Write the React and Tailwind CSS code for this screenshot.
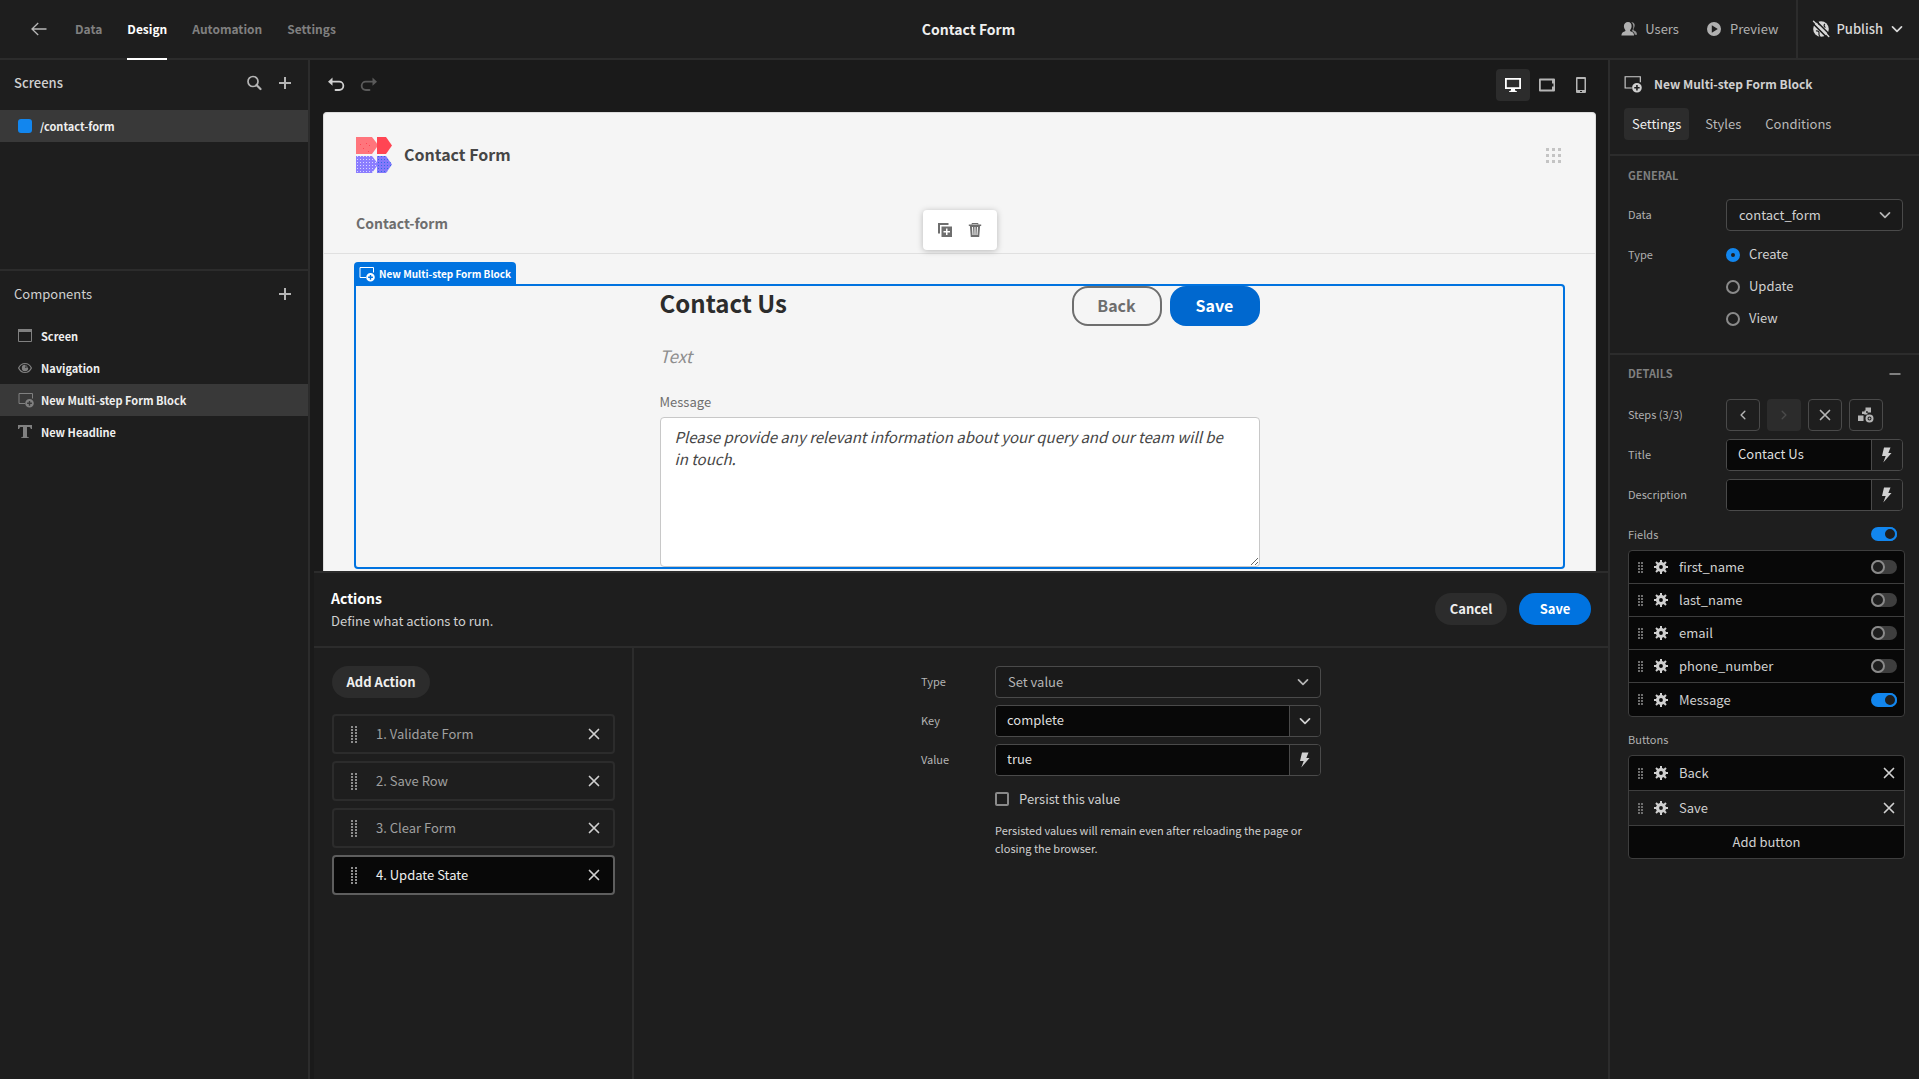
import React, { useState } from 'react';
import clsx from 'clsx';

const Svg = ({ size = 18, box = 18, className, children }) => (
  <svg width={size} height={size} viewBox={`0 0 ${box} ${box}`} fill="currentColor" className={clsx('shrink-0', className)} aria-hidden="true">
    {children}
  </svg>
);

const BackArrow = () => (
  <Svg size={16} box={16} className="text-[#b8b8b8]">
    <path d="M7.2 2 1 8l6.200 6M1.300 8H15.500" fill="none" stroke="currentColor" strokeWidth="1.300" />
  </Svg>
);

const SearchIcon = () => (
  <Svg size={16} box={16}>
    <circle cx="7" cy="6.500" r="5" fill="none" stroke="currentColor" strokeWidth="1.700" />
    <path d="m10.500 10 4 4" stroke="currentColor" strokeWidth="2.200" strokeLinecap="round" />
  </Svg>
);

const PlusIcon = () => (
  <Svg size={12} box={12}>
    <path d="M6 0v12M0 6h12" stroke="currentColor" strokeWidth="2" />
  </Svg>
);

const CrossIcon = ({ className }) => (
  <Svg size={12} box={12} className={className}>
    <path d="m1.500 1.500 9 9m0-9-9 9" stroke="currentColor" strokeWidth="1.700" strokeLinecap="round" />
  </Svg>
);

const ChevronIcon = ({ size = 12, className }) => (
  <Svg size={size} box={12} className={className}>
    <path d="m1.500 3.800 4.500 4.500 4.500-4.500" fill="none" stroke="currentColor" strokeWidth="1.700" strokeLinecap="round" strokeLinejoin="round" />
  </Svg>
);

const FormBlockIcon = ({ size = 16, className }) => (
  <Svg size={size} box={16} className={className}>
    <path d="M7 11.500H1v-10h13.500v5" fill="none" stroke="currentColor" strokeWidth="1" />
    <path fillRule="evenodd" d="M11.500 7a4.300 4.300 0 1 1 0 8.600 4.300 4.300 0 0 1 0-8.600Zm-.7 1.900v1.700H9.100V12h1.700v1.700h1.400V12h1.700v-1.400h-1.700V8.900Z" />
  </Svg>
);

const ScreenIcon = () => (
  <Svg size={14} box={14}>
    <path d="M0 0h14v3H0z" />
    <path d="M.5 2v10.500h13V2" fill="none" stroke="currentColor" />
  </Svg>
);

const EyeIcon = () => (
  <Svg size={14} box={14}>
    <path d="M.6 7C2 4 4.300 2.500 7 2.500S12 4 13.400 7C12 10 9.700 11.500 7 11.500S2 10 .6 7Z" fill="none" stroke="currentColor" strokeWidth="1.200" />
    <path d="M7 3.800a3.200 3.200 0 1 0 3.200 3.200H7.300V3.800Z" />
    <path d="M8 4v2.200h2" fill="none" stroke="currentColor" strokeWidth=".8" />
  </Svg>
);

const TextIcon = () => (
  <Svg size={14} box={14}>
    <path d="M0 0h14v4h-1.200c-.2-1.600-.8-2-2.200-2H9v9c0 1 .4 1.200 1.800 1.300V13H3.200v-.7C4.600 12.200 5 12 5 11V2H3.400C2 2 1.400 2.400 1.200 4H0Z" />
  </Svg>
);

const UndoIcon = ({ className }) => (
  <Svg size={18} box={18} className={className}>
    <path d="M5 5.700h7.200a3.700 3.700 0 0 1 0 8.300H8.500" fill="none" stroke="currentColor" strokeWidth="1.800" strokeLinecap="round" />
    <path d="M1 5.700 5.500 1.600v8.200Z" />
  </Svg>
);

const UsersIcon = () => (
  <Svg size={16} box={16}>
    <path d="M10.200 1.200c2.300-.3 3.600 1.300 3.500 3.400-.1 1.500-.8 2.600-1.200 3.500-.2.800.2 1.300 1 1.700 1.400.7 2.500 1.500 2.500 4h-2.200c-.2-2-1.300-3-3-3.800.9-1.200 1.500-2.800 1.500-4.600 0-1.800-.7-3.300-2.100-4.200Z" opacity=".8" />
    <path d="M7 1c2.400 0 3.700 1.800 3.600 4.200-.1 1.600-.8 2.900-1.400 3.700-.4.800 0 1.200.8 1.500 1.800.7 3 1.300 3.100 4.200H.400c.1-2.900 1.300-3.500 3.100-4.200.8-.3 1.200-.7.800-1.500-.6-.8-1.300-2.100-1.400-3.700C2.900 2.800 4.600 1 7 1Z" />
  </Svg>
);

const PlayIcon = () => (
  <Svg size={14} box={14}>
    <path fillRule="evenodd" d="M7 0a7 7 0 1 1 0 14A7 7 0 0 1 7 0ZM4.800 3.300v7.400L10.800 7Z" />
  </Svg>
);

const GlobeStrikeIcon = () => (
  <Svg size={18} box={18}>
    <circle cx="9" cy="9" r="7.800" />
    <path d="M6.500 1.500c-1 2 .5 3 1.500 3.500M13 4c-1.500.8-1 3 .5 3.500M4 11c1.500-.5 3.500.5 3 2.500s1 2.500 1 3.500" fill="none" stroke="#1e1e1e" strokeWidth="1.200" />
    <path d="m0 2.600 15.500 15.500M3.200 0 18 14.800" stroke="#1e1e1e" strokeWidth="1.500" />
    <path d="m1.500 1.200 15.300 15.300" stroke="currentColor" strokeWidth="1.400" strokeLinecap="round" />
  </Svg>
);

const DesktopIcon = () => (
  <Svg size={16} box={16}>
    <path fillRule="evenodd" d="M0 1h16v11h-6v1.500c1.300.2 2 .7 2 1.500H4c0-.8.700-1.300 2-1.500V12H0Zm1.800 1.800v7.400h12.400V2.800Z" />
  </Svg>
);

const TabletIcon = () => (
  <Svg size={16} box={16}>
    <path fillRule="evenodd" d="M1 1.500h14a1 1 0 0 1 1 1v11a1 1 0 0 1-1 1H1a1 1 0 0 1-1-1v-11a1 1 0 0 1 1-1Zm.8 2v9h11.200V9.400h1.500V6.600H13V3.500Z" />
  </Svg>
);

const PhoneIcon = () => (
  <Svg size={16} box={16}>
    <path fillRule="evenodd" d="M4 0h8a1 1 0 0 1 1 1v14a1 1 0 0 1-1 1H4a1 1 0 0 1-1-1V1a1 1 0 0 1 1-1Zm.5 2v11h7V2ZM7 14v1h2v-1Z" />
  </Svg>
);

const DuplicateIcon = () => (
  <Svg size={14} box={14}>
    <path d="M0 0h10.500v2H2v8.500H0Z" />
    <path fillRule="evenodd" d="M3.500 3.500H14V14H3.500ZM8 5.500V8H5.500v1.500H8V12h1.500V9.500H12V8H9.500V5.500Z" />
  </Svg>
);

const TrashIcon = () => (
  <Svg size={14} box={14}>
    <path d="M4 1.500V.5h6v1" fill="none" stroke="currentColor" />
    <path fillRule="evenodd" d="M.8 1.500h12.400V3h-1.100l-.9 11H2.800L1.900 3H.8ZM4 4l.5 8h1L5 4Zm2.500 0v8h1V4ZM9 4l-.5 8h1l.5-8Z" />
  </Svg>
);

const BoltIcon = () => (
  <Svg size={16} box={16}>
    <path d="M5 .5h6.500L9.300 6h3.200L4.300 15.500 6.700 9H3Z" />
  </Svg>
);

const StepsAddIcon = () => (
  <Svg size={16} box={16}>
    <path d="M0 8.500h5.500V14H0ZM7.500.5h5.500v5H9.800V4.300H8v1.500h1.500V7.500H7.600L6.500 8V7H4V4.500h2.500v-1h1Z" />
    <circle cx="11.500" cy="11.500" r="3" fill="none" stroke="currentColor" strokeWidth="2" />
    <circle cx="11.500" cy="11.500" r="1" />
  </Svg>
);

const GearIcon = () => (
  <Svg size={14} box={14} className="text-[#d0d0d0]">
    <circle cx="7" cy="7" r="3.500" fill="none" stroke="currentColor" strokeWidth="3.200" />
    <path d="M7 0v3M7 11v3M0 7h3M11 7h3M2 2l2.200 2.200M9.800 9.800 12 12M12 2 9.800 4.200M4.200 9.800 2 12" stroke="currentColor" strokeWidth="2" />
  </Svg>
);

const SmallGrip = () => (
  <svg width="5" height="11" viewBox="0 0 5 11" fill="#6e6e6e" className="shrink-0" aria-hidden="true">
    {[0, 3, 6, 9].map(y => (
      <React.Fragment key={y}>
        <rect x="0" y={y} width="2" height="2" />
        <rect x="3" y={y} width="2" height="2" />
      </React.Fragment>
    ))}
  </svg>
);

const LargeGrip = () => (
  <svg width="6" height="17" viewBox="0 0 6 17" fill="#8e8e8e" className="shrink-0" aria-hidden="true">
    {[0, 3, 6, 9, 12, 15].map(y => (
      <React.Fragment key={y}>
        <rect x="0" y={y} width="2" height="2" />
        <rect x="4" y={y} width="2" height="2" />
      </React.Fragment>
    ))}
  </svg>
);

const GridDots = () => (
  <svg width="15" height="15" viewBox="0 0 15 15" fill="#c4c4c4" aria-hidden="true">
    {[0, 6, 12].map(y => [0, 6, 12].map(x => <rect key={`${x}-${y}`} x={x} y={y} width="3" height="3" />))}
  </svg>
);

const Logo = () => (
  <svg width="36" height="36" viewBox="0 0 36 36" aria-hidden="true">
    <defs>
      <pattern id="light-dots" width="3" height="3" patternUnits="userSpaceOnUse">
        <rect x="1" y="1" width="1" height="1" fill="#d9d5ff" />
      </pattern>
      <pattern id="dark-dots" width="3" height="3" patternUnits="userSpaceOnUse">
        <rect x="1" y="1" width="1" height="1" fill="#2f6bea" />
      </pattern>
    </defs>
    <path d="M0 0h16l5 6.500V10l-5 7H0Z" fill="#ff757c" />
    <path d="M21 0h9l6 8.500-6 8.500h-9Z" fill="#ff4553" />
    <path d="M4 7h1v1H4Zm6-1h1v1h-1Zm3 2h1v1h-1Zm-6 3h1v1H7Zm5 3h1v1h-1Z" fill="#ff4553" />
    <path d="M0 19h16l5 6.500V29l-5 7H0Z" fill="#8b7dff" />
    <path d="M21 19h9l6 8.500-6 8.500h-9Z" fill="#8478fa" />
    <path d="M0 19h16l5 6.500V29l-5 7H0Z" fill="url(#light-dots)" />
    <path d="M21 19h9l6 8.500-6 8.500h-9Z" fill="url(#dark-dots)" />
  </svg>
);

const Toggle = ({ label, on }) => (
  <input
    type="checkbox"
    role="switch"
    aria-label={label}
    defaultChecked={on}
    className="h-[14px] w-[26px] shrink-0 appearance-none rounded-full bg-[#3e3e3e] before:block before:size-[14px] before:rounded-full before:border-2 before:border-[#8a8a8a] before:bg-[#1e1e1e] checked:bg-[#1286ee] checked:before:ml-3 checked:before:border-[#1286ee]"
  />
);

const Select = ({ id, value, className }) => (
  <div className={clsx('relative', className)}>
    <select id={id} defaultValue={value} className="h-8 w-full appearance-none rounded border border-[#4a4a4a] bg-[#1a1a1a] pr-8 pl-3 text-[13px]">
      <option>{value}</option>
    </select>
    <ChevronIcon className="pointer-events-none absolute top-[10px] right-3 text-[#b5b5b5]" />
  </div>
);

const ComboInput = ({ id, value, icon, action, className }) => (
  <div className={clsx('flex h-8 overflow-hidden rounded border border-[#4a4a4a]', className)}>
    <input id={id} type="text" defaultValue={value} className="min-w-0 flex-1 bg-[#080808] px-[11px] pb-[2px] text-[13px] text-[#dedede] outline-none" />
    <button type="button" aria-label={action} className="flex w-[31px] items-center justify-center border-l border-[#4a4a4a] bg-[#1c1c1c] text-[#d0d0d0]">
      {icon}
    </button>
  </div>
);

const navTabs = ['Data', 'Design', 'Automation', 'Settings'];

const components = [
  { name: 'Screen', icon: <ScreenIcon /> },
  { name: 'Navigation', icon: <EyeIcon /> },
  { name: 'New Multi-step Form Block', icon: <FormBlockIcon size={16} />, selected: true },
  { name: 'New Headline', icon: <TextIcon /> },
];

const actions = ['Validate Form', 'Save Row', 'Clear Form', 'Update State'];

const fields = [
  { name: 'first_name', on: false },
  { name: 'last_name', on: false },
  { name: 'email', on: false },
  { name: 'phone_number', on: false },
  { name: 'Message', on: true },
];

const TopBar = () => (
  <header className="grid h-[60px] shrink-0 grid-cols-[1fr_auto_1fr] border-b-2 border-[#2c2c2c]">
    <div className="flex">
      <button type="button" aria-label="Back" className="ml-[31px] mr-7">
        <BackArrow />
      </button>
      <nav className="-mb-[2px] flex gap-[25px] text-xs font-semibold">
        {navTabs.map(tab => (
          <a
            key={tab}
            href={`#${tab.toLowerCase()}`}
            className={clsx('flex items-center border-b-2', tab === 'Design' ? 'border-white text-white' : 'border-transparent text-[#808080]')}
          >
            {tab}
          </a>
        ))}
      </nav>
    </div>
    <h1 className="self-center pl-[18px] text-sm font-bold text-[#efefef]">Contact Form</h1>
    <div className="flex justify-end text-[13px]">
      <button type="button" className="mr-7 flex items-center gap-2 text-[#b0b0b0]">
        <UsersIcon /> Users
      </button>
      <button type="button" className="mr-[18px] flex items-center gap-[9px] text-[#b0b0b0]">
        <PlayIcon /> Preview
      </button>
      <button type="button" className="flex items-center border-l-2 border-[#2c2c2c] pr-4 pl-[14px] font-medium text-[#d8d8d8]">
        <GlobeStrikeIcon />
        <span className="mr-2 ml-[6px]">Publish</span>
        <ChevronIcon />
      </button>
    </div>
  </header>
);

const LeftSidebar = () => (
  <aside className="w-[310px] shrink-0 border-r-2 border-[#2c2c2c]">
    <section className="h-[211px] border-b-2 border-[#2c2c2c]">
      <div className="flex h-[50px] items-center pr-[17px] pb-1 pl-[14px] text-[#b5b5b5]">
        <h2 className="flex-1 text-[13px] font-medium text-[#d0d0d0]">Screens</h2>
        <button type="button" aria-label="Search screens" className="mr-[17px]">
          <SearchIcon />
        </button>
        <button type="button" aria-label="Add screen">
          <PlusIcon />
        </button>
      </div>
      <a href="#contact-form" className="flex h-8 items-center gap-2 bg-[#393939] pl-[18px] text-[11px] font-bold text-[#efefef]">
        <span className="size-[14px] rounded-[3px] bg-[#1286ee]" />
        /contact-form
      </a>
    </section>
    <section>
      <div className="flex h-[49px] items-center pr-[17px] pb-1 pl-[14px] text-[#b5b5b5]">
        <h2 className="flex-1 text-[13px] text-[#d0d0d0]">Components</h2>
        <button type="button" aria-label="Add component">
          <PlusIcon />
        </button>
      </div>
      <ul>
        {components.map(item => (
          <li key={item.name} className={clsx('flex h-8 items-center pl-[18px] text-[11px] font-bold text-[#efefef]', item.selected && 'bg-[#393939]')}>
            <span className="flex w-[23px] text-[#808080]">{item.icon}</span>
            {item.name}
          </li>
        ))}
      </ul>
    </section>
  </aside>
);

const Canvas = () => (
  <div className="px-3 pl-[13px]">
    <div className="flex h-[52px] items-center pb-[2px] pl-1">
      <button type="button" aria-label="Undo" className="mr-[15px] text-[#d0d0d0]">
        <UndoIcon />
      </button>
      <button type="button" aria-label="Redo" className="text-[#5a5a5a]">
        <UndoIcon className="-scale-x-100" />
      </button>
      <div className="-mr-[2px] ml-auto flex text-[#b5b5b5]">
        <button type="button" aria-label="Desktop" className="flex h-8 w-[34px] items-center justify-center rounded bg-[#2c2c2c] text-white">
          <DesktopIcon />
        </button>
        <button type="button" aria-label="Tablet" className="flex h-8 w-[34px] items-center justify-center">
          <TabletIcon />
        </button>
        <button type="button" aria-label="Mobile" className="flex h-8 w-[34px] items-center justify-center">
          <PhoneIcon />
        </button>
      </div>
    </div>

    <div className="rounded-t border border-b-0 border-[#dcdcdc] bg-[#f5f5f5]">
      <div className="border-b border-[#e0e0e0] px-8 pt-6">
        <div className="flex h-9 items-center pr-[2px]">
          <Logo />
          <p className="ml-3 flex-1 pb-[2px] text-base font-semibold text-[#464646]">Contact Form</p>
          <GridDots />
        </div>
        <div className="flex h-20 items-end pb-5">
          <a href="#contact-form" className="text-sm leading-5 font-semibold text-[#6e6e6e]">Contact-form</a>
        </div>
      </div>

      <div className="px-[30px] pt-[30px] pb-[2px]">
        <div className="relative rounded-sm rounded-tl-none border-2 border-[#0073e0]">
          <div className="absolute -top-6 -left-[2px] flex h-6 items-center gap-1 rounded-t bg-[#0073e0] px-[5px] pb-px text-[10px] font-bold whitespace-nowrap text-white">
            <FormBlockIcon size={16} />
            New Multi-step Form Block
          </div>
          {/* Floating component toolbar */}
          <div className="absolute -top-[76px] left-1/2 flex h-10 -translate-x-1/2 items-center gap-4 rounded bg-white px-[15px] text-[#6e6e6e] shadow-[0_1px_6px_rgba(0,0,0,0.25)]">
            <button type="button" aria-label="Duplicate">
              <DuplicateIcon />
            </button>
            <button type="button" aria-label="Delete">
              <TrashIcon />
            </button>
          </div>

          <form className="mx-auto max-w-[600px]" onSubmit={e => e.preventDefault()}>
            <div className="flex justify-between">
              <h2 className="text-2xl leading-[34px] font-semibold text-[#2c2c2c]">Contact Us</h2>
              <div className="flex gap-2 text-base font-bold">
                <button type="button" className="h-10 w-[90px] rounded-2xl border-2 border-[#6e6e6e] pb-[2px] text-[#6e6e6e]">Back</button>
                <button type="submit" className="h-10 w-[90px] rounded-2xl bg-[#0068cf] pb-[2px] text-white">Save</button>
              </div>
            </div>
            <p className="mt-[18px] text-[17px] leading-6 text-[#8e8e8e] italic">Text</p>
            <label htmlFor="message" className="mt-6 block h-[25px] text-[13px] leading-5 text-[#6e6e6e]">Message</label>
            <textarea
              id="message"
              placeholder="Please provide any relevant information about your query and our team will be in touch."
              className="block h-[150px] w-full rounded border border-[#c8c8c8] bg-white py-2 pr-6 pl-[14px] text-[15px] leading-[22px] italic placeholder:text-[#464646]"
            />
          </form>
        </div>
      </div>
    </div>
  </div>
);

const ActionsDrawer = () => {
  const [selected, setSelected] = useState('Update State');
  const rowLabel = 'pb-[2px] text-[11px]';

  return (
    <section className="ml-1 flex flex-1 flex-col border-t-2 border-[#2c2c2c] bg-[#1e1e1e]">
      <div className="flex h-[75px] shrink-0 items-center border-b-2 border-[#2c2c2c] pr-[17px] pb-[2px] pl-[17px]">
        <div className="flex-1">
          <h2 className="text-sm leading-6 font-bold text-white">Actions</h2>
          <p className="text-[13px] leading-[22px] text-[#d0d0d0]">Define what actions to run.</p>
        </div>
        <div className="flex gap-3 text-[13px] font-bold text-[#efefef]">
          <button type="button" className="h-8 w-[72px] rounded-full bg-[#2c2c2c]">Cancel</button>
          <button type="button" className="h-8 w-[72px] rounded-full bg-[#0073e0] text-white">Save</button>
        </div>
      </div>

      <div className="flex flex-1">
        <div className="w-[320px] shrink-0 border-r-2 border-[#2c2c2c] pt-[18px] pr-[17px] pl-[18px]">
          <button type="button" className="h-8 w-[98px] rounded-full bg-[#2c2c2c] text-[13px] font-bold text-[#efefef]">Add Action</button>
          <ul className="mt-4 space-y-[7px]">
            {actions.map((action, index) => (
              <li
                key={action}
                onClick={() => setSelected(action)}
                className={clsx(
                  'flex h-10 items-center rounded border-2 pr-[13px] pl-[17px] text-[13px]',
                  selected === action ? 'border-[#5e5e5e] bg-[#080808] text-[#efefef]' : 'border-[#2c2c2c] text-[#a0a0a0]'
                )}
              >
                <LargeGrip />
                <span className="ml-[19px] flex-1">{index + 1}. {action}</span>
                <button type="button" aria-label={`Remove ${action}`} className="text-[#d0d0d0]">
                  <CrossIcon />
                </button>
              </li>
            ))}
          </ul>
        </div>

        <div className="flex-1 px-4 pt-[18px]">
          <div className="mx-auto grid max-w-[400px] grid-cols-[74px_1fr] items-center gap-y-[7px] text-[#b5b5b5]">
            <label htmlFor="action-type" className={rowLabel}>Type</label>
            <Select id="action-type" value="Set value" />
            <label htmlFor="action-key" className={rowLabel}>Key</label>
            <ComboInput id="action-key" value="complete" action="Choose key" icon={<ChevronIcon />} />
            <label htmlFor="action-value" className={rowLabel}>Value</label>
            <ComboInput id="action-value" value="true" action="Bind value" icon={<BoltIcon />} />
            <label className="col-start-2 flex h-[31px] items-center gap-[10px] text-[13px] text-[#d0d0d0]">
              <input type="checkbox" className="size-[14px] appearance-none rounded-[2px] border-2 border-[#8a8a8a]" />
              Persist this value
            </label>
            <p className="col-start-2 text-[11px] leading-[18px] text-[#d0d0d0]">
              Persisted values will remain even after reloading the page or closing the browser.
            </p>
          </div>
        </div>
      </div>
    </section>
  );
};

const SettingsPanel = () => {
  const rowLabel = 'w-[98px] shrink-0 pb-[2px] text-[11px] text-[#b0b0b0]';
  const stepButton = 'flex h-8 w-[34px] items-center justify-center rounded border border-[#4a4a4a] text-[#b5b5b5]';

  return (
    <aside className="w-[311px] shrink-0 border-l-2 border-[#2c2c2c]">
      <div className="h-24 border-b-2 border-[#2c2c2c] pl-[14px]">
        <div className="flex h-12 items-center gap-3 text-xs font-semibold text-[#d0d0d0]">
          <FormBlockIcon size={18} />
          <h2>New Multi-step Form Block</h2>
        </div>
        <div role="tablist" className="flex gap-2 text-[13px] text-[#b8b8b8]">
          <button type="button" role="tab" aria-selected="true" className="h-8 rounded bg-[#2c2c2c] px-2 text-[#efefef]">Settings</button>
          <button type="button" role="tab" aria-selected="false" className="h-8 px-2">Styles</button>
          <button type="button" role="tab" aria-selected="false" className="h-8 px-2">Conditions</button>
        </div>
      </div>

      <section className="border-b-2 border-[#2c2c2c] pr-4 pb-[18px] pl-[18px]">
        <h3 className="flex h-[43px] items-center pb-[5px] text-[11px] font-semibold text-[#808080]">GENERAL</h3>
        <div className="flex items-center text-[#d0d0d0]">
          <label htmlFor="data-source" className={rowLabel}>Data</label>
          <Select id="data-source" value="contact_form" className="flex-1" />
        </div>
        <div role="radiogroup" aria-labelledby="form-type" className="mt-2 flex">
          <span id="form-type" className={clsx(rowLabel, 'leading-[30px]')}>Type</span>
          <div>
            {['Create', 'Update', 'View'].map(type => (
              <label key={type} className="flex h-8 items-center gap-[9px] text-[13px] text-[#d0d0d0]">
                <input
                  type="radio"
                  name="form-type"
                  defaultChecked={type === 'Create'}
                  className="size-[14px] appearance-none rounded-full border-2 border-[#8a8a8a] checked:border-[5px] checked:border-[#1286ee]"
                />
                <span className="pb-[2px]">{type}</span>
              </label>
            ))}
          </div>
        </div>
      </section>

      <section className="pr-[14px] pl-[18px]">
        <div className="flex h-11 items-center justify-between pr-1 pb-[7px] text-[#808080]">
          <h3 className="text-[11px] font-semibold">DETAILS</h3>
          <button type="button" aria-label="Collapse details">
            <Svg size={12} box={12}>
              <path d="M.5 5h11v2H.5z" />
            </Svg>
          </button>
        </div>
        <div className="flex items-center">
          <span className={rowLabel}>Steps (3/3)</span>
          <div className="flex gap-[7px]">
            <button type="button" aria-label="Previous step" className={stepButton}>
              <ChevronIcon size={10} className="rotate-90" />
            </button>
            <button type="button" aria-label="Next step" disabled className="flex h-8 w-[34px] items-center justify-center rounded bg-[#2c2c2c] text-[#4a4a4a]">
              <ChevronIcon size={10} className="-rotate-90" />
            </button>
            <button type="button" aria-label="Remove step" className={stepButton}>
              <CrossIcon />
            </button>
            <button type="button" aria-label="Add step" className={stepButton}>
              <StepsAddIcon />
            </button>
          </div>
        </div>
        <div className="mt-2 flex items-center pr-[2px]">
          <label htmlFor="step-title" className={rowLabel}>Title</label>
          <ComboInput id="step-title" value="Contact Us" action="Bind title" icon={<BoltIcon />} className="flex-1" />
        </div>
        <div className="mt-2 flex items-center pr-[2px]">
          <label htmlFor="step-description" className={rowLabel}>Description</label>
          <ComboInput id="step-description" value="" action="Bind description" icon={<BoltIcon />} className="flex-1" />
        </div>

        <div className="mt-2 flex h-[31px] items-center justify-between pr-2 pb-px">
          <span className="text-[11px] text-[#b0b0b0]">Fields</span>
          <Toggle label="All fields" on />
        </div>
        <ul className="divide-y divide-[#3e3e3e] rounded border border-[#3e3e3e] bg-[#080808] text-[13px] text-[#d0d0d0]">
          {fields.map(field => (
            <li key={field.name} className="flex h-[33px] items-center pr-[7px] pl-[9px]">
              <SmallGrip />
              <button type="button" aria-label={`Configure ${field.name}`} className="mr-[11px] ml-[11px]">
                <GearIcon />
              </button>
              <span className="flex-1">{field.name}</span>
              <Toggle label={field.name} on={field.on} />
            </li>
          ))}
        </ul>

        <h4 className="flex h-[38px] items-center pt-[6px] text-[11px] text-[#b0b0b0]">Buttons</h4>
        <div className="overflow-hidden rounded border border-[#3e3e3e] bg-[#080808] text-[13px] text-[#d0d0d0]">
          <ul>
            {['Back', 'Save'].map(name => (
              <li key={name} className={clsx('flex h-[35px] items-center border-b border-[#3e3e3e] px-[9px]', name === 'Save' && 'bg-[#1a1a1a]')}>
                <SmallGrip />
                <button type="button" aria-label={`Configure ${name}`} className="mr-[11px] ml-[11px]">
                  <GearIcon />
                </button>
                <span className="flex-1">{name}</span>
                <button type="button" aria-label={`Remove ${name}`}>
                  <CrossIcon />
                </button>
              </li>
            ))}
          </ul>
          <button type="button" className="h-8 w-full">Add button</button>
        </div>
      </section>
    </aside>
  );
};

const App = () => (
  <div className="flex min-h-screen flex-col bg-[#1e1e1e] font-['Noto_Sans_CJK_SC',sans-serif] text-[#d0d0d0]">
    <TopBar />
    <div className="flex flex-1">
      <LeftSidebar />
      <main className="flex min-w-0 flex-1 flex-col bg-[#1a1a1a]">
        <Canvas />
        <ActionsDrawer />
      </main>
      <SettingsPanel />
    </div>
  </div>
);

export default App;
